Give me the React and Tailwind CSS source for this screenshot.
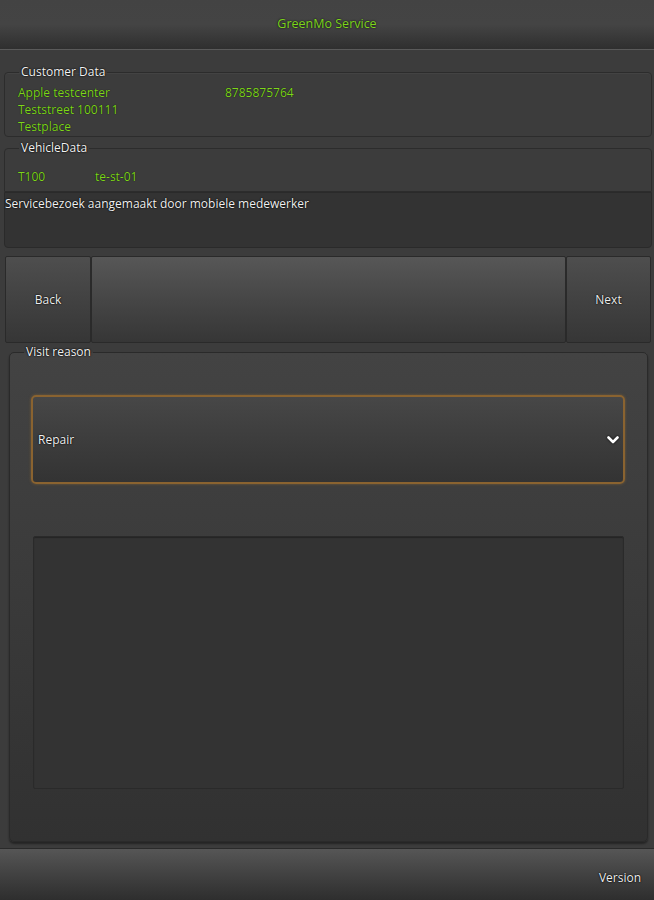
import React from 'react';

function Legend({ children }) {
  return (
    <legend className="ml-[1px] px-[2px] leading-[16px] text-[12px] text-[#f2f2f2] [text-shadow:0_0_2px_#000,0_0_1px_#000]">
      {children}
    </legend>
  );
}

export default function App() {
  return (
    <div className="w-[654px] h-[900px] flex flex-col bg-[#3c3c3c] font-['Open_Sans',sans-serif] text-[12px] overflow-hidden">
      {/* Header */}
      <header className="h-[50px] shrink-0 flex items-center justify-center bg-gradient-to-b from-[#434343] via-[#444444] to-[#2f2f2f] border-b border-[#5a5a5a] pb-[1px]">
        <span className="text-[12.5px] text-[#7ed51c] [text-shadow:0_0_2px_#000]">GreenMo Service</span>
      </header>

      <main className="flex-1 flex flex-col pl-[4px] pr-[2px] min-h-0">
        {/* Customer Data */}
        <fieldset className="mt-[14px] border border-[#2c2c2c] rounded-[4px] pl-[13px] pr-[13px] pt-[4px] pb-[1px] shadow-[inset_0_1px_0_rgba(255,255,255,0.04)]">
          <Legend>Customer Data</Legend>
          <div className="grid grid-cols-[207px_1fr] leading-[17px] text-[#7ed51c] [text-shadow:0_0_1px_#000]">
            <span>Apple testcenter</span>
            <span>8785875764</span>
            <span>Teststreet 100111</span>
            <span></span>
            <span>Testplace</span>
          </div>
        </fieldset>

        {/* Vehicle Data */}
        <fieldset className="mt-[3px] border border-[#2c2c2c] rounded-t-[4px] pl-[13px] pr-[13px] pt-[12px] pb-[6px]">
          <Legend>VehicleData</Legend>
          <div className="flex leading-[17px] text-[#7ed51c] [text-shadow:0_0_1px_#000]">
            <span className="w-[77px]">T100</span>
            <span>te-st-01</span>
          </div>
        </fieldset>
        <div className="h-[56px] bg-[#333333] border border-[#2a2a2a] rounded-b-[4px] pt-[2px] leading-[17px] text-[#f0f0f0] [text-shadow:0_0_2px_#000,0_0_1px_#000]">
          Servicebezoek aangemaakt door mobiele medewerker
        </div>

        {/* Buttons */}
        <div className="mt-[8px] ml-[1px] mr-[1px] h-[87px] flex">
          <button className="w-[86px] flex items-center justify-center bg-gradient-to-b from-[#4e4e4e] to-[#363636] border border-[#2a2a2a] rounded-[2px] text-[#eeeeee] text-[12px] [text-shadow:0_0_2px_#000,0_0_1px_#000]">
            Back
          </button>
          <div className="flex-1 bg-gradient-to-b from-[#575757] to-[#363636] border border-[#2a2a2a] rounded-[2px]" />
          <button className="w-[85px] flex items-center justify-center bg-gradient-to-b from-[#4e4e4e] to-[#363636] border border-[#2a2a2a] rounded-[2px] text-[#eeeeee] text-[12px] [text-shadow:0_0_2px_#000,0_0_1px_#000]">
            Next
          </button>
        </div>

        {/* Visit reason */}
        <fieldset className="flex-1 mt-[1px] mb-[6px] ml-[5px] mr-[4px] border border-[#2a2a2a] rounded-[5px] bg-gradient-to-b from-[#434343] to-[#313131] flex flex-col min-h-0 shadow-[0_2px_2px_rgba(0,0,0,0.4)]">
          <legend className="ml-[14px] px-[2px] leading-[16px] text-[12px] text-[#f2f2f2] [text-shadow:0_0_2px_#000,0_0_1px_#000]">
            Visit reason
          </legend>
          <div className="mt-[35px] ml-[21px] mr-[22px] h-[89px] flex items-center justify-between pl-[5px] pr-[4px] border-2 border-[#8a6330] rounded-[5px] bg-gradient-to-b from-[#474747] to-[#333333] shadow-[0_0_3px_rgba(170,120,50,0.5)]">
            <span className="text-[#f0f0f0] text-[12px] [text-shadow:0_0_2px_#000,0_0_1px_#000]">Repair</span>
            <svg width="12" height="10" viewBox="0 0 12 10" className="drop-shadow-[0_0_1px_#000]">
              <path d="M1.5 2.5 L6 7 L10.5 2.5" fill="none" stroke="#ffffff" strokeWidth="2.6" strokeLinecap="round" strokeLinejoin="round" />
            </svg>
          </div>
          <div className="mt-[52px] ml-[23px] mr-[23px] h-[253px] bg-[#333333] border border-[#2a2a2a] rounded-[2px] shadow-[inset_0_1px_1px_rgba(0,0,0,0.3)]" />
        </fieldset>
      </main>

      {/* Footer */}
      <footer className="h-[52px] shrink-0 flex items-center justify-end pr-[13px] pt-[6px] bg-gradient-to-b from-[#565656] to-[#2e2e2e] border-t border-[#2a2a2a]">
        <span className="text-[#eeeeee] text-[12px] [text-shadow:0_0_2px_#000,0_0_1px_#000]">Version</span>
      </footer>
    </div>
  );
}
